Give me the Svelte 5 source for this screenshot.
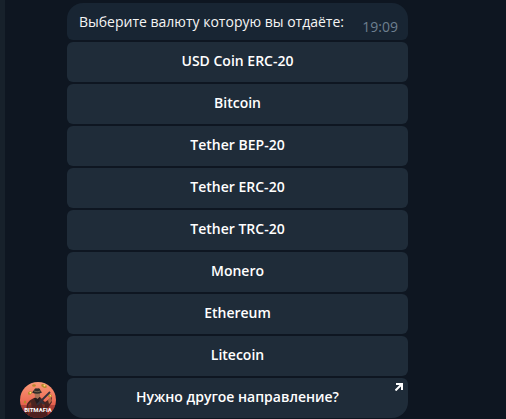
<script>
  let { time = '19:09' } = $props();

  const currencies = [
    'USD Coin ERC-20',
    'Bitcoin',
    'Tether BEP-20',
    'Tether ERC-20',
    'Tether TRC-20',
    'Monero',
    'Ethereum',
    'Litecoin',
  ];

  let picked = $state(null);
</script>

<main class="chat">
  <svg class="avatar" viewBox="0 0 36 36" role="img" aria-label="BITMAFIA">
    <defs>
      <linearGradient id="sky" x1="0" y1="0" x2="0" y2="1">
        <stop offset="0" stop-color="#fb9a78" />
        <stop offset="0.5" stop-color="#ef7058" />
        <stop offset="1" stop-color="#c9362f" />
      </linearGradient>
      <clipPath id="round"><circle cx="18" cy="18" r="18" /></clipPath>
    </defs>
    <g clip-path="url(#round)">
      <rect width="36" height="36" fill="url(#sky)" />
      <!-- coins -->
      <g fill="#b98a2c">
        <ellipse cx="14" cy="3.5" rx="1.8" ry="1.2" />
        <ellipse cx="24" cy="4" rx="3" ry="1.6" transform="rotate(25 24 4)" />
        <ellipse cx="10" cy="11" rx="2.2" ry="1.6" transform="rotate(-25 10 11)" />
        <ellipse cx="30" cy="14" rx="2" ry="1.4" />
        <ellipse cx="5" cy="20" rx="1.2" ry="1.5" />
      </g>
      <g fill="#ffe27a">
        <circle cx="24.5" cy="3.6" r="1" />
        <circle cx="10.4" cy="10.6" r="0.9" />
        <circle cx="30.3" cy="13.7" r="0.7" />
      </g>
      <!-- coat -->
      <path d="M5 36 L7 22 Q9 18 14 16 L20 15 L25 20 L28 18 L32 15 L32 20 L27 28 L28 36 Z" fill="#4b2420" />
      <path d="M14 16 L18 25 L20 15 Z" fill="#241b1e" />
      <path d="M8 23 L11 20 L12 29 L8 34 Z M22 21 L25 23 L24 30 Z" fill="#873824" />
      <path d="M28 18 L31 15 L32 19 L29 22 Z" fill="#b76646" />
      <!-- face and hat -->
      <path d="M14.5 11 H20 V14.5 L17.5 17 L15 15 Z" fill="#a87358" />
      <path d="M14 8 Q15 5.5 17 6.5 Q20 5.5 20.5 8.5 L22 10.5 Q17 13 12 10.5 Z" fill="#302c29" />
      <path d="M14 9 Q17 10.5 20.5 9" fill="none" stroke="#8a7658" stroke-width="0.8" />
      <!-- gun -->
      <path d="M17 23 L30 10 M21 19 L24 22" stroke="#34303b" stroke-width="1.8" />
      <rect y="23" width="36" height="13" fill="#551b20" opacity="0.35" />
      <text class="brand" x="18" y="30" text-anchor="middle">BITMAFIA</text>
    </g>
  </svg>

  <section class="message">
    <div class="bubble">
      <p>Выберите валюту которую вы отдаёте:</p>
      <time>{time}</time>
    </div>
    {#each currencies as name}
      <button class="key" class:on={picked === name} onclick={() => (picked = name)}>{name}</button>
    {/each}
    <a class="key last" href="#support">
      Нужно другое направление?
      <svg class="arrow" viewBox="0 0 8 8" aria-hidden="true">
        <path d="M1 1 H7 V7 M7 1 L0.5 7.5" />
      </svg>
    </a>
  </section>
</main>

<style>
  :global(body) { background: #0e1621; }
  .chat {
    display: flex; align-items: flex-end; gap: 11px;
    padding: 3px 98px 1px 15px; border-left: 5px solid #17212b;
    font-family: 'Open Sans', 'Noto Sans', sans-serif; font-size: 14px; line-height: 20px;
  }
  .avatar { width: 36px; height: 36px; flex: 0 0 auto; }
  .brand { font: 700 6px 'Roboto', 'Liberation Sans', sans-serif; fill: #fff; }
  .message { flex: 1; min-width: 0; display: flex; flex-direction: column; gap: 2px; }
  .bubble {
    display: flex; justify-content: space-between; gap: 12px;
    padding: 9px 10px 3px 12px; box-sizing: border-box; min-height: 37px;
    background: #182533; border-radius: 16px 16px 6px 6px; color: #f5f5f5;
  }
  p { margin: 0; }
  time { align-self: flex-end; color: #6d7f8f; }
  .key {
    position: relative; display: block; box-sizing: border-box; width: 100%; min-height: 40px;
    margin: 0; padding: 9px 20px 11px; border: 0; border-radius: 6px;
    background: #1f2c39; color: #fff; cursor: pointer;
    font: inherit; font-weight: 600; text-align: center; text-decoration: none;
  }
  .key:hover { background: #253443; }
  .key.on { background: #2b3b4b; }
  .last { border-radius: 6px 6px 16px 16px; }
  .arrow {
    position: absolute; top: 5px; right: 5px; width: 8px; height: 8px;
    fill: none; stroke: #fff; stroke-width: 2;
  }
</style>
